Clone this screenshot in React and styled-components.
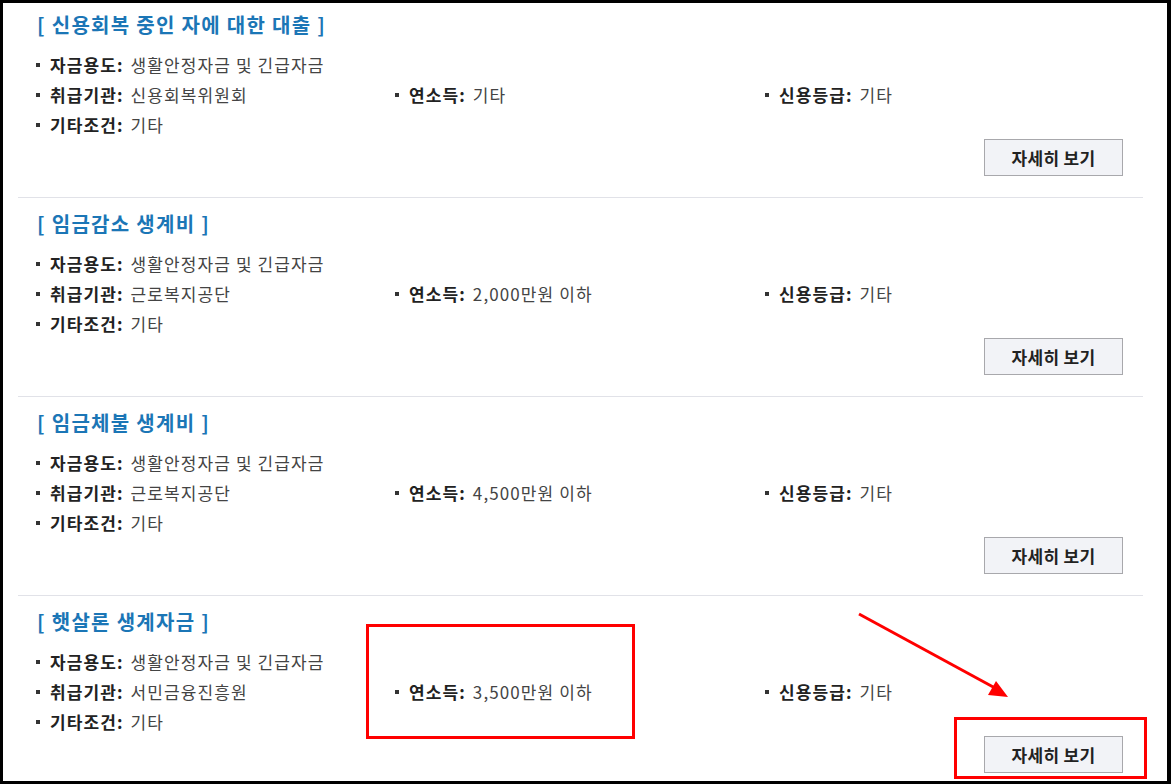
import React from 'react';
import styled, { createGlobalStyle } from 'styled-components';

const GlobalStyle = createGlobalStyle`
  html, body {
    margin: 0;
    padding: 0;
    background: #ffffff;
  }
  body {
    font-family: "Noto Sans CJK KR", "Noto Sans", sans-serif;
  }
`;

const Frame = styled.div`
  position: relative;
  box-sizing: border-box;
  width: 1171px;
  height: 784px;
  overflow: hidden;
  background: #ffffff;
  border-style: solid;
  border-color: #000000;
  border-width: 3px 4px 3px 3px;
`;

const Section = styled.section`
  margin: 0 24px 0 15px;
  padding: 14px 20px 21px 0;
  border-top: 1px solid #e1e2e8;

  &:first-child {
    border-top: none;
    padding-top: 10px;
  }
`;

const Title = styled.h3`
  margin: 0 0 12px 19px;
  font-size: 20px;
  line-height: 24px;
  font-weight: 700;
  color: #1b76b6;
  letter-spacing: 1.3px;
`;

const List = styled.ul`
  list-style: none;
  margin: 0;
  padding: 0 0 0 18px;
`;

const Row = styled.li`
  display: grid;
  grid-template-columns: 359px 370px 1fr;
  height: 30px;
  align-items: center;
`;

const Item = styled.div`
  display: flex;
  align-items: center;
  font-size: 17px;
  letter-spacing: 1.1px;
  color: #444;
  white-space: nowrap;

  &::before {
    content: '';
    width: 4px;
    height: 4px;
    margin: 2px 10px 0 0;
    background: #333;
    flex: none;
  }
`;

const Label = styled.b`
  font-weight: 700;
  color: #222;
  margin-right: 7px;
`;

const Actions = styled.div`
  display: flex;
  justify-content: flex-end;
`;

const DetailButton = styled.button`
  box-sizing: border-box;
  width: 139px;
  height: 37px;
  border: 1px solid #a8a8ac;
  background: #f2f3f7;
  font-family: inherit;
  font-size: 17px;
  font-weight: 700;
  letter-spacing: 0.3px;
  color: #222;
  cursor: pointer;
`;

const Mark = styled.div`
  position: absolute;
  box-sizing: border-box;
  border: 3px solid #ff0000;
  pointer-events: none;
`;

const Arrow = styled.svg`
  position: absolute;
  left: 0;
  top: 0;
  pointer-events: none;
`;

const loans = [
  { title: '신용회복 중인 자에 대한 대출', agency: '신용회복위원회', income: '기타' },
  { title: '임금감소 생계비', agency: '근로복지공단', income: '2,000만원 이하' },
  { title: '임금체불 생계비', agency: '근로복지공단', income: '4,500만원 이하' },
  { title: '햇살론 생계자금', agency: '서민금융진흥원', income: '3,500만원 이하' },
];

const Entry = ({ label, children }) => (
  <Item>
    <Label>{label}:</Label>
    {children}
  </Item>
);

export default function App() {
  return (
    <>
      <GlobalStyle />
      <Frame>
        {loans.map((loan) => (
          <Section key={loan.title}>
            <Title>[ {loan.title} ]</Title>
            <List>
              <Row>
                <Entry label="자금용도">생활안정자금 및 긴급자금</Entry>
              </Row>
              <Row>
                <Entry label="취급기관">{loan.agency}</Entry>
                <Entry label="연소득">{loan.income}</Entry>
                <Entry label="신용등급">기타</Entry>
              </Row>
              <Row>
                <Entry label="기타조건">기타</Entry>
              </Row>
            </List>
            <Actions>
              <DetailButton type="button">자세히 보기</DetailButton>
            </Actions>
          </Section>
        ))}
        <Mark style={{ left: 363, top: 621, width: 269, height: 115 }} />
        <Mark style={{ left: 951, top: 714, width: 193, height: 62 }} />
        <Arrow width="1164" height="778" viewBox="0 0 1164 778">
          <line x1="856" y1="611" x2="992" y2="685" stroke="#ff0000" strokeWidth="3" />
          <polygon points="1005,694 985,692 993,678" fill="#ff0000" />
        </Arrow>
      </Frame>
    </>
  );
}
